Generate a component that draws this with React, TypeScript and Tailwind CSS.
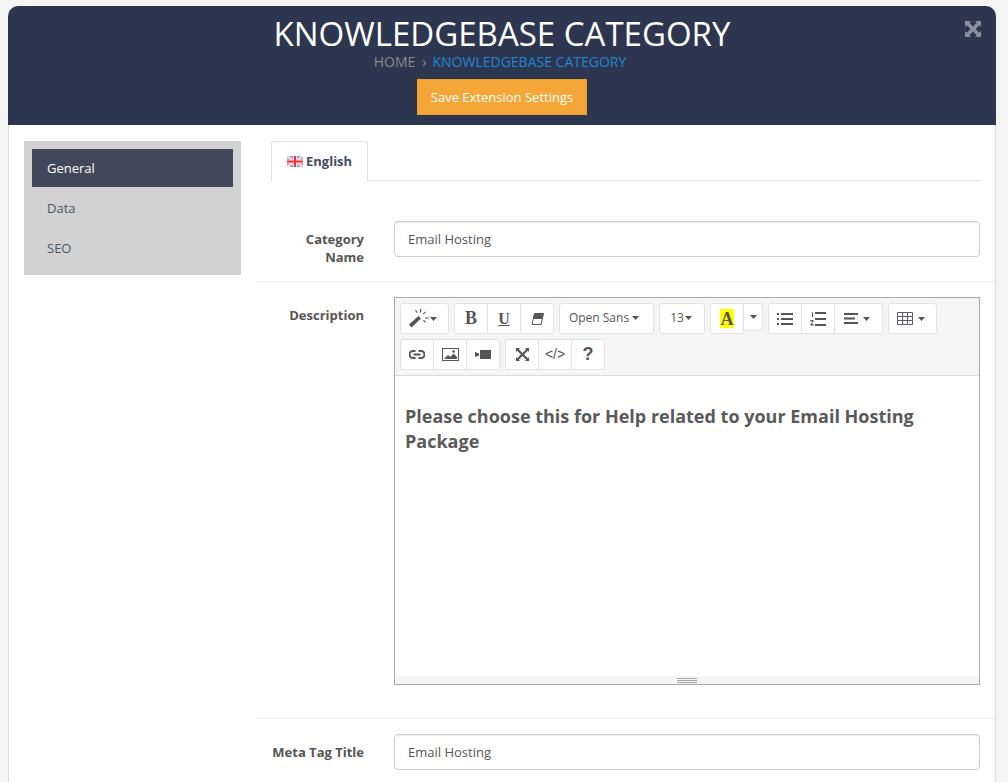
const Caret = () => (
  <svg width="7" height="4" viewBox="0 0 7 4" className="shrink-0"><path d="M0 0h7L3.5 4z" fill="#555" /></svg>
)

const Btn = ({ className = '', children }: { className?: string; children?: React.ReactNode }) => (
  <div className={`flex h-[31px] items-center justify-center border border-[#e2e2e2] bg-white text-[#555] ${className}`}>{children}</div>
)

const Magic = () => (
  <svg width="20" height="19" viewBox="0 0 20 19" fill="#555">
    <path d="M0 15.500 9.500 7l2.500 2.500L2.500 18.500z" />
    <path d="M11 0h1.200v3.500H11zM16 2.500l.8.8-2.200 2.200-.8-.8zM16 8.500h4v1h-4zM6 1.500l.9-.6 1.800 2.600-.9.6zM14 11.500l.8-.8 2.200 2.200-.8.8z" />
  </svg>
)

const Eraser = () => (
  <svg width="13" height="12" viewBox="0 0 13 12">
    <path d="M3.500 0.500H12.500L10 11.500H1z" fill="#fff" stroke="#555" />
    <path d="M3.500 0.500H12.500L11.200 6H2.200z" fill="#555" />
  </svg>
)

const UL = () => (
  <svg width="16" height="12" viewBox="0 0 16 12" fill="#555">
    <rect x="0" y="0" width="2" height="2" /><rect x="0" y="5" width="2" height="2" /><rect x="0" y="10" width="2" height="2" />
    <rect x="4" y="0" width="12" height="2" /><rect x="4" y="5" width="12" height="2" /><rect x="4" y="10" width="12" height="2" />
  </svg>
)

const OL = () => (
  <svg width="16" height="14" viewBox="0 0 16 14" fill="#555">
    <rect x="5" y="0" width="11" height="2" /><rect x="5" y="6" width="11" height="2" /><rect x="5" y="12" width="11" height="2" />
    <path d="M1.500 1 3 0v5H2V1.500zM0.500 8h3v1.200l-2 2.800h2.200v1.500H.5v-1.200l2-2.800H.5z" />
  </svg>
)

const Align = () => (
  <svg width="14" height="11" viewBox="0 0 14 11" fill="#555">
    <rect x="0" y="0" width="14" height="2" /><rect x="0" y="4.500" width="11" height="2" /><rect x="0" y="9" width="14" height="2" />
  </svg>
)

const TableIcon = () => (
  <svg width="16" height="13" viewBox="0 0 16 13" fill="none" stroke="#5c5c6a">
    <path d="M.5.500h15v12H.5zM.5 4.500h15M.5 8.500h15M5.500.500v12M10.500.500v12" />
  </svg>
)

const LinkIcon = () => (
  <svg width="16" height="9" viewBox="0 0 16 9" fill="none" stroke="#555" strokeWidth="2">
    <path d="M6.500 1H4a3.500 3.500 0 0 0 0 7h2.500M9.500 1H12a3.500 3.500 0 0 1 0 7H9.500M4.500 4.500h7" />
  </svg>
)

const Picture = () => (
  <svg width="17" height="13" viewBox="0 0 17 13">
    <rect x=".5" y=".5" width="16" height="12" fill="#fff" stroke="#555" />
    <path d="M2 11l4-4 2.500 2 3-3.500L15 9v2z" fill="#555" />
    <circle cx="11.500" cy="3.500" r="1.300" fill="#555" />
  </svg>
)

const Video = () => (
  <svg width="16" height="9" viewBox="0 0 16 9" fill="#555">
    <path d="M0 2l4 1.500v2L0 7z" /><rect x="5" y="0" width="11" height="9" />
  </svg>
)

// heavy version, window corner of the header
const Arrows = ({ size = 16, color = '#8a909e' }: { size?: number; color?: string }) => (
  <svg width={size} height={size} viewBox="0 0 16 16" fill="none">
    <path d="M0 0h6L4.300 1.700 8 5.400l3.700-3.700L10 0h6v6l-1.700-1.700L10.600 8l3.700 3.700L16 10v6h-6l1.700-1.700L8 10.600l-3.700 3.700L6 16H0v-6l1.700 1.700L5.400 8 1.700 4.300 0 6z" fill={color} />
  </svg>
)

// thin version, editor toolbar
const ArrowsThin = () => (
  <svg width="13" height="13" viewBox="0 0 13 13" fill="#555">
    <path d="M0 0h4L2.800 1.200l3.700 3.700 3.700-3.700L9 0h4v4l-1.200-1.200-3.700 3.700 3.700 3.700L13 9v4H9l1.200-1.200-3.700-3.700-3.700 3.700L4 13H0V9l1.200 1.200 3.700-3.700-3.700-3.700L0 4z" />
  </svg>
)

const Flag = () => (
  <svg width="16" height="11" viewBox="0 0 16 11">
    <rect width="16" height="11" fill="#8f93c8" />
    <path d="M0 0l16 11M16 0L0 11" stroke="#f3d5dc" strokeWidth="2.500" />
    <path d="M8 0v11M0 5.500h16" stroke="#f7dfe4" strokeWidth="4" />
    <path d="M8 0v11M0 5.500h16" stroke="#ee3340" strokeWidth="2" />
  </svg>
)

const inputCls = 'h-[36px] w-[586px] rounded-[4px] border border-[#ccc] bg-white px-[13px] pt-[1px] text-[13px] text-[#555] shadow-[inset_0_1px_1px_rgba(0,0,0,0.075)] flex items-center'
const labelCls = 'w-[108px] shrink-0 text-right text-[13px] font-bold leading-[18px] text-[#555]'

export default function App() {
  return (
    <div className="h-[782px] overflow-hidden bg-[#f5f5f5] pl-[8px] pt-[6px] [font-family:'Open_Sans',sans-serif]">
      <div className="h-[776px] w-[988px] overflow-hidden rounded-t-[10px] bg-white">
        {/* header */}
        <div className="relative flex h-[119px] flex-col items-center bg-[#2d364f]">
          <h1 className="mt-[9px] h-[38px] text-[33px] leading-[38px] text-white">KNOWLEDGEBASE CATEGORY</h1>
          <div className="-ml-[4px] flex h-[18px] items-center text-[14px] leading-[18px]">
            <span className="text-[#8a8a8a]">HOME</span>
            <span className="ml-[7px] mr-[6px] text-[#8a8a8a]">›</span>
            <span className="text-[#2284d2]">KNOWLEDGEBASE CATEGORY</span>
          </div>
          <div className="mt-[8px] flex h-[36px] w-[170px] items-center justify-center border border-[#f0a02c] bg-[#f4a636] pt-[1px] text-[13px] text-white">
            Save Extension Settings
          </div>
          <div className="absolute right-[15px] top-[15px]"><Arrows /></div>
        </div>

        <div className="flex h-[657px] border-x border-[#dcdcdc]">
          {/* sidebar */}
          <div className="w-[247px] shrink-0 pl-[15px] pt-[16px]">
            <div className="h-[134px] w-[217px] bg-[#d2d2d2] p-[8px] text-[13px] text-[#4c5566]">
              <div className="flex h-[38px] items-center bg-[#414859] pl-[15px] pt-[2px] text-white">General</div>
              <div className="flex h-[42px] items-center pl-[15px] pt-[2px]">Data</div>
              <div className="flex h-[38px] items-center pl-[15px] pt-[2px]">SEO</div>
            </div>
          </div>

          {/* main */}
          <div className="min-w-0 flex-1">
            <div className="ml-[15px] mr-[14px] mt-[16px] flex h-[40px] border-b border-[#e0e0e0]">
              <div className="flex h-[40px] w-[97px] items-center gap-[3px] rounded-t-[3px] border-x border-t border-[#e0e0e0] bg-white pl-[15px] text-[13px] font-bold text-[#444b5e]">
                <Flag /> English
              </div>
            </div>

            <div className="flex border-b border-[#eee] pb-[15px] pt-[40px]">
              <div className={`${labelCls} pt-[9px]`}>Category<br />Name</div>
              <div className={`ml-[30px] ${inputCls}`}>Email Hosting</div>
            </div>

            <div className="flex border-b border-[#eee] pb-[33px] pt-[15px]">
              <div className={`${labelCls} pt-[9px]`}>Description</div>
              <div className="ml-[30px] flex h-[388px] w-[586px] flex-col border border-[#a9a9a9]">
                <div className="h-[78px] shrink-0 border-b border-[#ddd] bg-[#f5f5f5] pl-[5px] pt-[5px]">
                  <div className="flex h-[31px] gap-[5px]">
                    <Btn className="w-[49px] gap-[1px] rounded-[3px] pr-[3px]"><Magic /><Caret /></Btn>
                    <div className="flex">
                      <Btn className="w-[34px] rounded-l-[3px] font-['Liberation_Serif',serif] text-[18px] font-bold">B</Btn>
                      <Btn className="-ml-px w-[34px] font-['Liberation_Serif',serif] text-[16px] font-bold underline">U</Btn>
                      <Btn className="-ml-px w-[34px] rounded-r-[3px]"><Eraser /></Btn>
                    </div>
                    <Btn className="w-[95px] gap-[3px] rounded-[3px] pb-[2px] pr-[5px] text-[12px]">Open Sans <Caret /></Btn>
                    <Btn className="w-[46px] gap-[1px] rounded-[3px] pb-[2px] pr-[2px] text-[12px]">13<Caret /></Btn>
                    <div className="flex items-start">
                      <Btn className="w-[34px] rounded-l-[3px]">
                        <span className="flex h-[19px] w-[14px] items-center justify-center bg-[#ffff00] font-['Liberation_Serif',serif] text-[18px] font-bold leading-none">A</span>
                      </Btn>
                      <Btn className="-ml-px !h-[28px] w-[20px] rounded-r-[3px]"><Caret /></Btn>
                    </div>
                    <div className="flex">
                      <Btn className="w-[34px] rounded-l-[3px]"><UL /></Btn>
                      <Btn className="-ml-px w-[34px]"><OL /></Btn>
                      <Btn className="-ml-px w-[49px] gap-[5px] rounded-r-[3px] pr-[3px]"><Align /><Caret /></Btn>
                    </div>
                    <Btn className="w-[49px] gap-[5px] rounded-[3px] pr-[3px]"><TableIcon /><Caret /></Btn>
                  </div>
                  <div className="mt-[5px] flex h-[31px] gap-[5px]">
                    <div className="flex">
                      <Btn className="w-[34px] rounded-l-[3px]"><LinkIcon /></Btn>
                      <Btn className="-ml-px w-[34px]"><Picture /></Btn>
                      <Btn className="-ml-px w-[34px] rounded-r-[3px]"><Video /></Btn>
                    </div>
                    <div className="flex">
                      <Btn className="w-[34px] rounded-l-[3px]"><ArrowsThin /></Btn>
                      <Btn className="-ml-px w-[34px] font-['Liberation_Sans',sans-serif] text-[14px]">&lt;/&gt;</Btn>
                      <Btn className="-ml-px w-[34px] rounded-r-[3px] font-['Liberation_Sans',sans-serif] text-[18px] font-bold">?</Btn>
                    </div>
                  </div>
                </div>
                <div className="min-h-0 flex-1 bg-white px-[10px] pt-[28px] text-[18px] font-bold leading-[25px] text-[#5a5a5a]">
                  Please choose this for Help related to your Email Hosting Package
                </div>
                <div className="flex h-[8px] shrink-0 flex-col items-center justify-center gap-[1px] bg-[#f5f5f5]">
                  <div className="h-px w-[20px] bg-[#a9a9a9]" />
                  <div className="h-px w-[20px] bg-[#a9a9a9]" />
                  <div className="h-px w-[20px] bg-[#a9a9a9]" />
                </div>
              </div>
            </div>

            <div className="flex pt-[15px]">
              <div className={`${labelCls} pt-[9px]`}>Meta Tag Title</div>
              <div className={`ml-[30px] ${inputCls}`}>Email Hosting</div>
            </div>
          </div>
        </div>
      </div>
    </div>
  )
}
